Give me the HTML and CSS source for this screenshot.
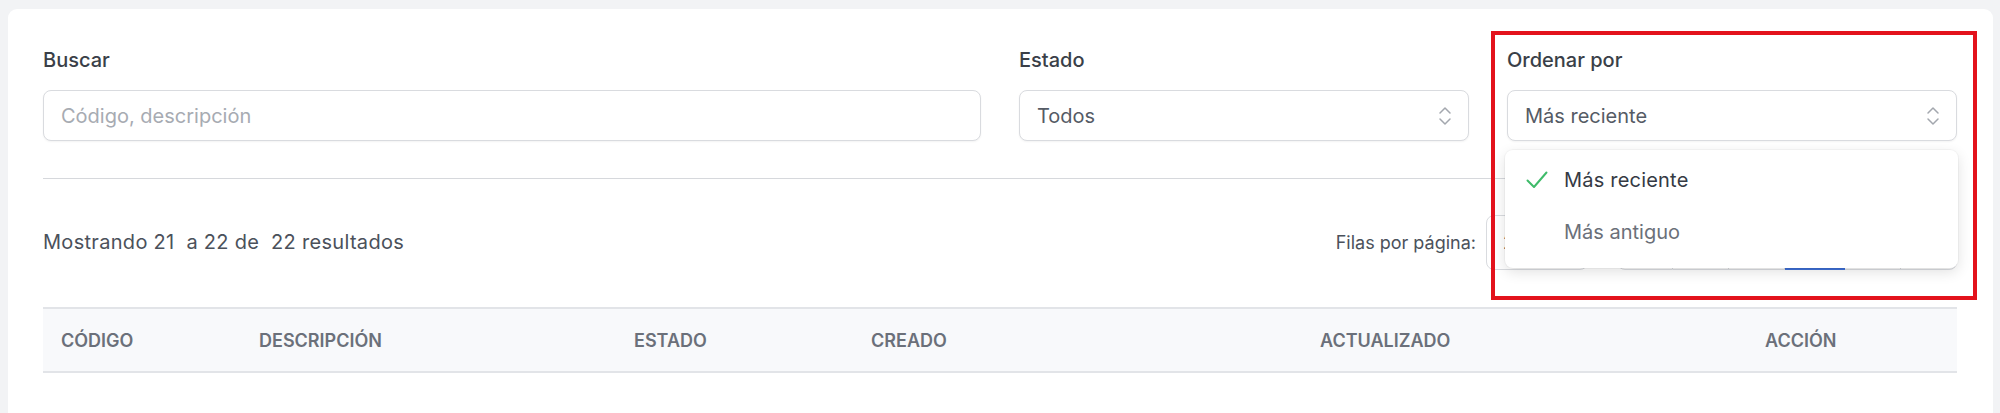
FILE: index.html
```html
<!DOCTYPE html>
<html lang="es">
<head>
<meta charset="utf-8">
<title>Listado</title>
<link rel="stylesheet" href="styles.css">
</head>
<body>
<div class="page">
  <div class="card">
    <div class="filters">
      <div class="field span2">
        <label class="label">Buscar</label>
        <input class="input" type="text" placeholder="Código, descripción">
      </div>
      <div class="field">
        <label class="label">Estado</label>
        <div class="select">
          <span>Todos</span>
          <svg class="updown" viewBox="0 0 14 22" width="14" height="22"><path d="M2 8 L7 3 L12 8 M2 14 L7 19 L12 14" fill="none" stroke="#a3a7ae" stroke-width="1.5" stroke-linecap="round" stroke-linejoin="round"/></svg>
        </div>
      </div>
      <div class="field sort">
        <label class="label">Ordenar por</label>
        <div class="select">
          <span>Más reciente</span>
          <svg class="updown" viewBox="0 0 14 22" width="14" height="22"><path d="M2 8 L7 3 L12 8 M2 14 L7 19 L12 14" fill="none" stroke="#a3a7ae" stroke-width="1.5" stroke-linecap="round" stroke-linejoin="round"/></svg>
        </div>
        <ul class="menu">
          <li class="item selected">
            <svg class="check" viewBox="0 0 22 18" width="22" height="18"><path d="M1.5 9.5 L8 16 L20.5 1.5" fill="none" stroke="#3fbb6a" stroke-width="2" stroke-linecap="round" stroke-linejoin="round"/></svg>
            <span>Más reciente</span>
          </li>
          <li class="item">
            <span class="check-space"></span>
            <span>Más antiguo</span>
          </li>
        </ul>
      </div>
    </div>

    <hr class="divider">

    <div class="results">
      <div class="summary">Mostrando 21&nbsp; a 22 de&nbsp; 22 resultados</div>
      <div class="rows">
        <span class="rows-label">Filas por página:</span>
        <div class="rows-select">20</div>
      </div>
      <nav class="pager">
        <span class="pg first">«</span>
        <span class="pg">‹</span>
        <span class="pg">1</span>
        <span class="pg active">2</span>
        <span class="pg">›</span>
        <span class="pg last">»</span>
      </nav>
    </div>

    <div class="table">
      <div class="thead">
        <div class="th">CÓDIGO</div>
        <div class="th">DESCRIPCIÓN</div>
        <div class="th">ESTADO</div>
        <div class="th">CREADO</div>
        <div class="th">ACTUALIZADO</div>
        <div class="th">ACCIÓN</div>
      </div>
    </div>
  </div>
  <div class="highlight"></div>
</div>
</body>
</html>
```

FILE: styles.css
```css
* { box-sizing: border-box; }

html, body {
  margin: 0;
  padding: 0;
  background: #f2f3f5;
  font-family: Inter, "Noto Sans", "Liberation Sans", sans-serif;
  color: #374151;
}

.page {
  position: relative;
  padding: 9px 7px 0 8px;
  height: 413px;
  overflow: hidden;
}

.card {
  background: #ffffff;
  border-radius: 9px;
  padding: 39px 36px 60px 35px;
  min-height: 460px;
}

.filters {
  display: grid;
  grid-template-columns: repeat(4, 1fr);
  column-gap: 38px;
}

.field {
  display: flex;
  flex-direction: column;
}

.span2 { grid-column: span 2; }

.sort { position: relative; }

.label {
  font-size: 20px;
  line-height: 24px;
  font-weight: 500;
  color: #3a3f48;
  margin-bottom: 18px;
}

.input,
.select {
  height: 51px;
  border: 1px solid #d9dbdf;
  border-radius: 8px;
  background: #fff;
  box-shadow: 0 1px 2px rgba(0, 0, 0, 0.05);
  font-family: inherit;
  font-size: 20px;
  padding: 0 17px;
  color: #555b65;
}

.input { outline: none; width: 100%; }
.input::placeholder { color: #a7abb2; }

.select {
  display: flex;
  align-items: center;
  justify-content: space-between;
}

.updown { margin-right: -1px; }

.menu {
  position: absolute;
  top: 102px;
  left: -2px;
  right: -1px;
  margin: 0;
  padding: 4px 0 10px;
  list-style: none;
  background: #fff;
  border-radius: 8px;
  box-shadow: 0 4px 14px rgba(0, 0, 0, 0.12), 0 0 0 1px rgba(0, 0, 0, 0.03);
  z-index: 5;
}

.item {
  height: 52px;
  display: flex;
  align-items: center;
  padding-left: 21px;
  gap: 16px;
  font-size: 20px;
  color: #6b7079;
}

.item.selected { color: #353a44; letter-spacing: 0.2px; }

.check { flex: none; width: 22px; height: 18px; }
.check-space { width: 22px; flex: none; }

.divider {
  border: 0;
  border-top: 1px solid #d6d8dc;
  margin: 37px 0 0;
}

.results {
  margin-top: 35px;
  height: 56px;
  display: flex;
  align-items: center;
}

.summary {
  flex: 1;
  font-size: 20px;
  letter-spacing: 0.3px;
  color: #4b515b;
}

.rows {
  display: flex;
  align-items: center;
  gap: 10px;
}

.rows-label { font-size: 18px; color: #4b515b; }

.rows-select {
  width: 102px;
  height: 55px;
  border: 1px solid #d9dbdf;
  border-radius: 8px;
  display: flex;
  align-items: center;
  padding-left: 16px;
  font-size: 19px;
}

.pager {
  margin-left: 29px;
  display: flex;
  height: 55px;
}

.pg {
  width: 56px;
  display: flex;
  align-items: center;
  justify-content: center;
  border: 1px solid #d9dbdf;
  border-left-width: 0;
  font-size: 18px;
  color: #6b7079;
}

.pg.first { border-left-width: 1px; border-radius: 8px 0 0 8px; }
.pg.last { border-radius: 0 8px 8px 0; }
.pg.active { border: 2px solid #3d6fd6; width: 60px; }

.table { margin-top: 37px; }

.thead {
  display: grid;
  grid-template-columns: 198px 375px 237px 449px 445px 1fr;
  height: 66px;
  align-items: center;
  background: #f8f9fb;
  border-top: 2px solid #e2e4e8;
  border-bottom: 2px solid #e2e4e8;
}

.th {
  padding-left: 18px;
  font-size: 18px;
  font-weight: 600;
  color: #6b707a;
}

.highlight {
  position: absolute;
  left: 1491px;
  top: 31px;
  width: 486px;
  height: 269px;
  border: 4px solid #e3121c;
  pointer-events: none;
  z-index: 10;
}
```
